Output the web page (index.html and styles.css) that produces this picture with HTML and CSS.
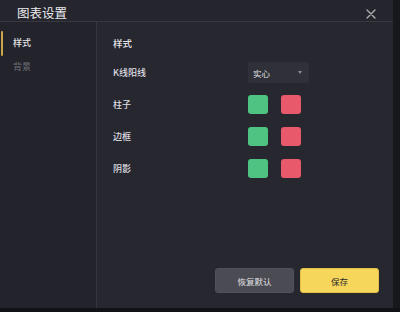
FILE: index.html
```html
<!DOCTYPE html>
<html lang="zh">
<head>
<meta charset="utf-8">
<title>图表设置</title>
<link rel="stylesheet" href="styles.css">
</head>
<body>
<div class="page">
  <div class="dialog">
    <div class="header">
      <span class="title">图表设置</span>
      <svg class="close" width="10" height="10" viewBox="0 0 10 10"><path d="M1 1 L9 9 M9 1 L1 9" stroke="#b0b0b6" stroke-width="1.3" fill="none" stroke-linecap="round"/></svg>
    </div>
    <div class="body">
      <div class="sidebar">
        <div class="nav-item active">样式</div>
        <div class="nav-item">背景</div>
      </div>
      <div class="content">
        <div class="heading">样式</div>
        <div class="form">
          <div class="row">
            <span class="label">K线阳线</span>
            <div class="select"><span>实心</span><span class="caret"></span></div>
          </div>
          <div class="row">
            <span class="label">柱子</span>
            <div class="swatches"><span class="sw green"></span><span class="sw red"></span></div>
          </div>
          <div class="row">
            <span class="label">边框</span>
            <div class="swatches"><span class="sw green"></span><span class="sw red"></span></div>
          </div>
          <div class="row">
            <span class="label">阴影</span>
            <div class="swatches"><span class="sw green"></span><span class="sw red"></span></div>
          </div>
        </div>
        <div class="actions">
          <button class="btn secondary">恢复默认</button>
          <button class="btn primary">保存</button>
        </div>
      </div>
    </div>
  </div>
  <div class="chart-edge"></div>
</div>
<div class="bottom-strip"></div>
</body>
</html>
```
FILE: styles.css
```css
html, body {
  margin: 0;
  padding: 0;
  background: #141519;
  font-family: "Noto Sans CJK SC", "Noto Sans", sans-serif;
}
.page {
  display: flex;
  height: 308px;
  width: 400px;
}
.dialog {
  width: 393px;
  height: 308px;
  background: #26262e;
  display: flex;
  flex-direction: column;
}
.chart-edge {
  flex: 1;
  background: #17181c;
}
.bottom-strip {
  height: 4px;
  background: #111215;
}
.header {
  height: 21px;
  border-bottom: 1px solid #37383f;
  display: flex;
  align-items: center;
  justify-content: space-between;
  padding: 0 17px 0 17px;
  background: #25252d;
}
.title {
  color: #ececef;
  font-size: 12.5px;
  line-height: 14px;
  margin-top: 4px;
}
.close {
  display: block;
  margin-right: 0;
  margin-top: 6px;
}
.body {
  flex: 1;
  display: flex;
}
.sidebar {
  width: 96px;
  border-right: 1px solid #35363d;
  background: #23242b;
  padding-top: 9px;
}
.nav-item {
  height: 24px;
  line-height: 24px;
  font-size: 9px;
  color: #6f7078;
  padding-left: 13px;
  position: relative;
}
.nav-item.active {
  color: #e4e4e8;
  font-weight: 500;
}
.nav-item.active::before {
  content: "";
  position: absolute;
  left: 1px;
  top: 0;
  width: 2px;
  height: 25px;
  background: #c9a64a;
  border-radius: 1px;
}
.content {
  flex: 1;
  display: flex;
  flex-direction: column;
  padding: 15px 14px 15px 16px;
  background: #27272f;
}
.heading {
  font-size: 9.5px;
  line-height: 12px;
  color: #e6e6ea;
  font-weight: 500;
}
.form {
  display: flex;
  flex-direction: column;
  gap: 11px;
  margin-top: 13px;
}
.row {
  display: flex;
  align-items: center;
  height: 21px;
}
.label {
  width: 135px;
  font-size: 9px;
  color: #dcdce0;
  font-weight: 500;
}
.select {
  width: 61px;
  height: 21px;
  background: #2f3038;
  border-radius: 2px;
  display: flex;
  align-items: center;
  justify-content: space-between;
  padding: 0 7px 0 5px;
  box-sizing: border-box;
  font-size: 8.5px;
  color: #e2e2e6;
}
.caret {
  width: 0;
  height: 0;
  border-left: 2px solid transparent;
  border-right: 2px solid transparent;
  border-top: 3px solid #8a8b93;
}
.swatches {
  display: flex;
  gap: 13px;
}
.sw {
  display: block;
  width: 20px;
  height: 19px;
  border-radius: 3px;
}
.sw.green { background: #4fc482; }
.sw.red { background: #e8596b; }
.actions {
  margin-top: auto;
  display: flex;
  justify-content: flex-end;
  gap: 6px;
}
.btn {
  width: 79px;
  height: 25px;
  border-radius: 3px;
  font-family: "Noto Sans CJK SC", sans-serif;
  font-size: 8.5px;
  border: 1px solid transparent;
  padding: 0;
}
.btn.secondary {
  background: #4a4b53;
  color: #e0e0e4;
  border-color: #505159;
}
.btn.primary {
  background: #f7d65c;
  color: #2a2a2a;
  border-color: #e3bf45;
}
```
